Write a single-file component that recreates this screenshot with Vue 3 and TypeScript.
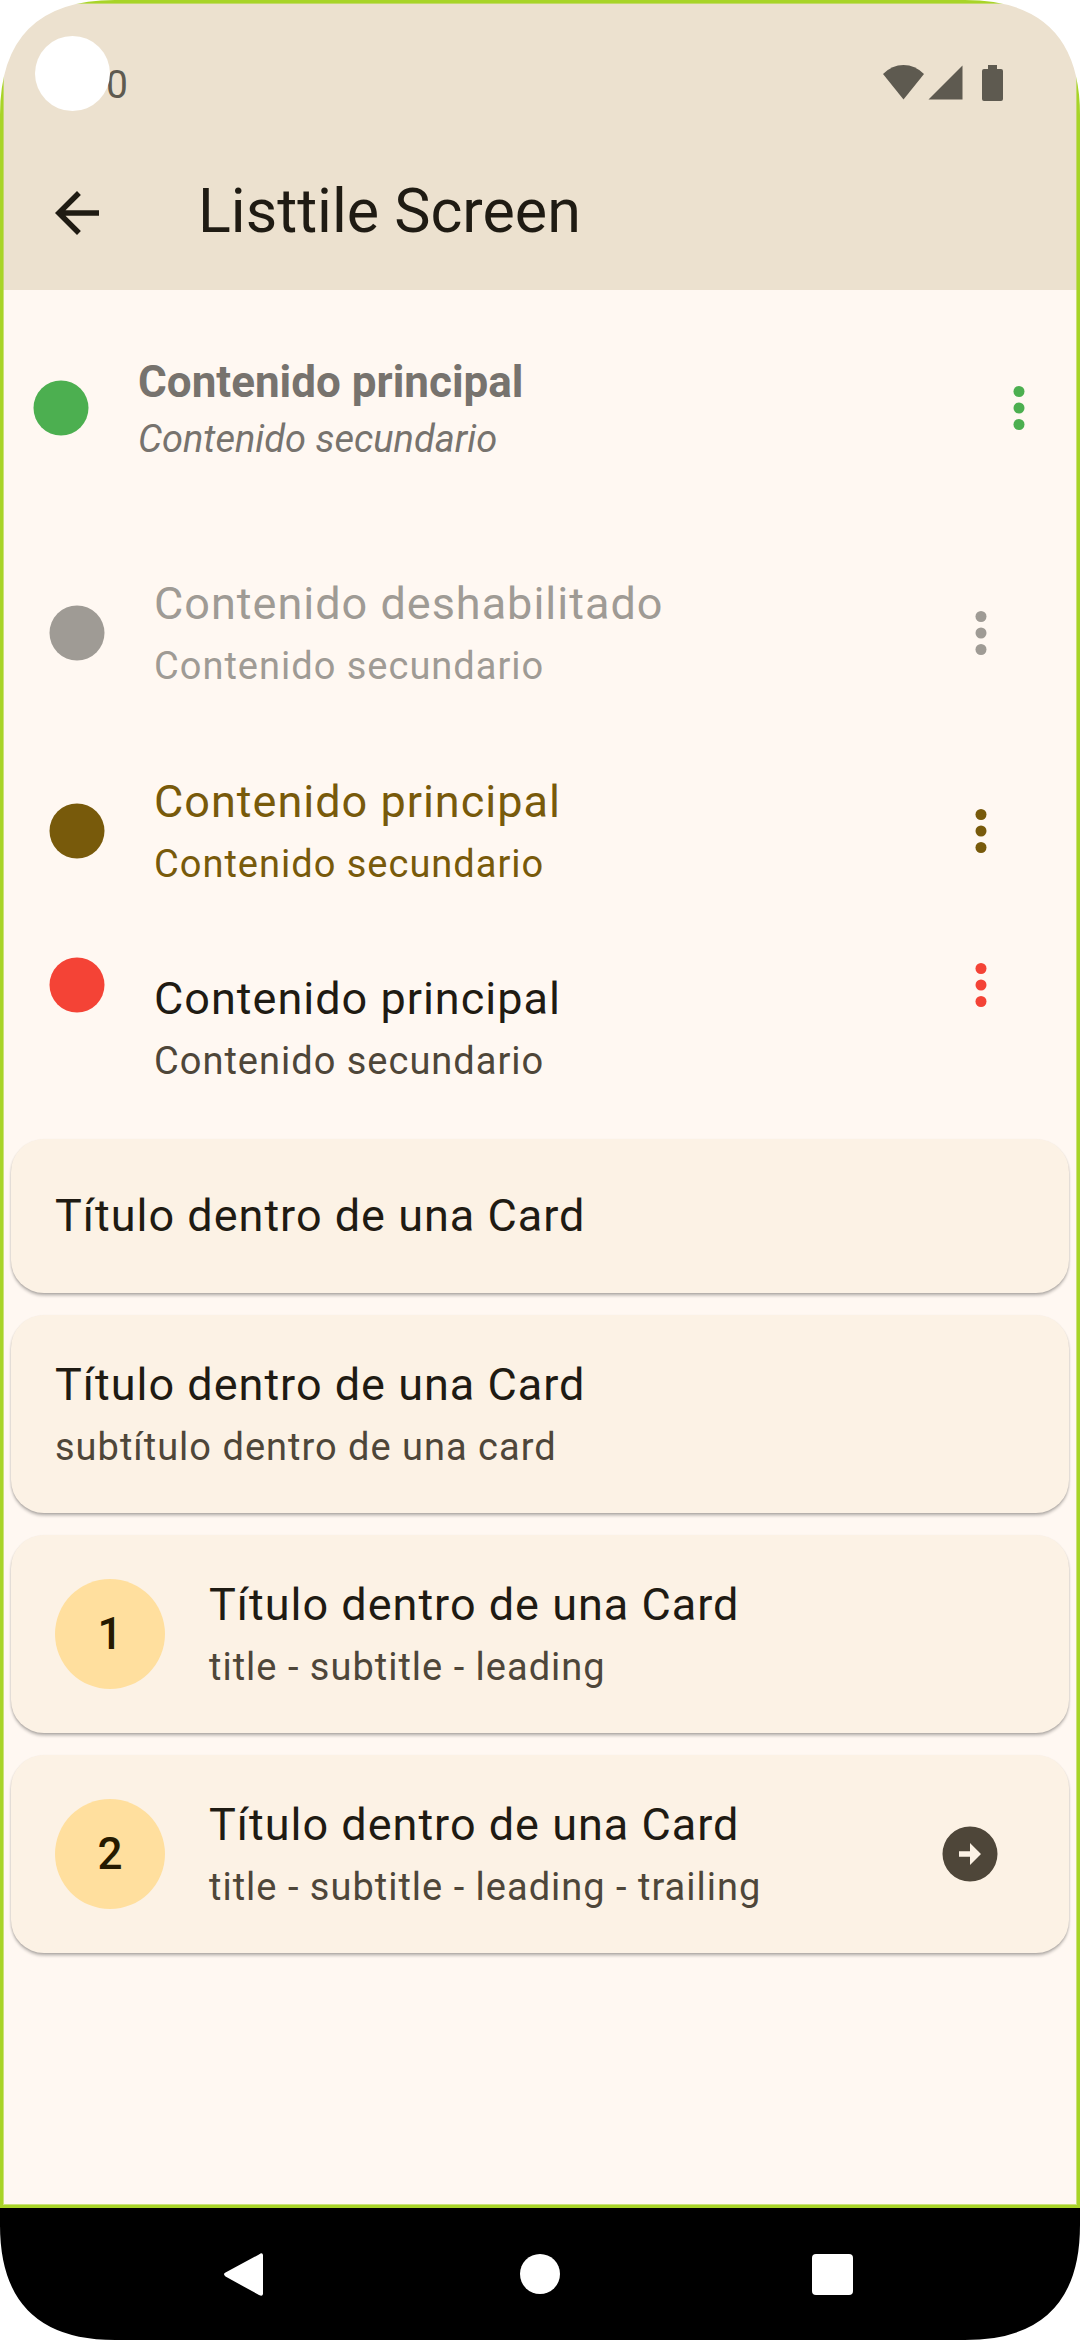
<script setup lang="ts">
interface Tile {
  title: string
  subtitle: string
  tone: 'emphasis' | 'disabled' | 'selected' | 'plain'
}

interface CardItem {
  title: string
  subtitle?: string
  leading?: string
  trailing?: boolean
}

const tiles: Tile[] = [
  { title: 'Contenido principal', subtitle: 'Contenido secundario', tone: 'emphasis' },
  { title: 'Contenido deshabilitado', subtitle: 'Contenido secundario', tone: 'disabled' },
  { title: 'Contenido principal', subtitle: 'Contenido secundario', tone: 'selected' },
  { title: 'Contenido principal', subtitle: 'Contenido secundario', tone: 'plain' },
]

const cards: CardItem[] = [
  { title: 'Título dentro de una Card' },
  { title: 'Título dentro de una Card', subtitle: 'subtítulo dentro de una card' },
  { title: 'Título dentro de una Card', subtitle: 'title - subtitle - leading', leading: '1' },
  {
    title: 'Título dentro de una Card',
    subtitle: 'title - subtitle - leading - trailing',
    leading: '2',
    trailing: true,
  },
]

const corners = ['top-left', 'top-right', 'bottom-right', 'bottom-left']
</script>

<template>
  <div class="device">
    <div class="screen">
      <header class="header">
        <div class="status-bar">
          <span class="clock">0</span>
          <div class="status-icons">
            <svg class="wifi" width="42" height="36" viewBox="0 0 42 36" aria-hidden="true">
              <path d="M0 9Q9 0 20.500 0Q32 0 41 9L20.500 34.500Z" />
            </svg>
            <svg class="signal" width="36" height="36" viewBox="0 0 36 36" aria-hidden="true">
              <path d="M34.500 0.500V34.500H0.500Z" />
            </svg>
            <svg width="21" height="36" viewBox="0 0 21 36" aria-hidden="true">
              <path d="M6 0h9v4h4q2 0 2 2v28q0 2-2 2h-17q-2 0-2-2v-28q0-2 2-2h4z" />
            </svg>
          </div>
        </div>
        <div class="app-bar">
          <button class="icon-button" type="button" aria-label="Volver">
            <svg class="icon" viewBox="0 0 24 24" aria-hidden="true">
              <path d="M20 11H7.830l5.590-5.590L12 4l-8 8 8 8 1.410-1.410L7.830 13H20v-2z" />
            </svg>
          </button>
          <h1 class="heading">Listtile Screen</h1>
        </div>
      </header>

      <main class="content">
        <ul class="tiles">
          <li v-for="(tile, i) in tiles" :key="i" class="tile" :class="tile.tone">
            <svg class="icon tinted" viewBox="0 0 24 24" aria-hidden="true">
              <circle cx="12" cy="12" r="10" />
            </svg>
            <div class="text">
              <div class="title">{{ tile.title }}</div>
              <div class="subtitle">{{ tile.subtitle }}</div>
            </div>
            <button
              class="icon-button tinted"
              type="button"
              aria-label="Más opciones"
              :disabled="tile.tone === 'disabled'"
            >
              <svg class="icon" viewBox="0 0 24 24" aria-hidden="true">
                <circle cx="12" cy="6" r="2" />
                <circle cx="12" cy="12" r="2" />
                <circle cx="12" cy="18" r="2" />
              </svg>
            </button>
          </li>
        </ul>

        <ul class="cards">
          <li v-for="(card, i) in cards" :key="i" class="card" :class="{ tall: card.subtitle }">
            <div v-if="card.leading" class="avatar">{{ card.leading }}</div>
            <div class="text">
              <div class="title">{{ card.title }}</div>
              <div v-if="card.subtitle" class="subtitle">{{ card.subtitle }}</div>
            </div>
            <svg v-if="card.trailing" class="icon" viewBox="0 0 24 24" aria-hidden="true">
              <path
                fill-rule="evenodd"
                d="M12 2a10 10 0 1 0 0 20 10 10 0 0 0 0-20zM12 8l4 4-4 4v-3H8v-2h4z"
              />
            </svg>
          </li>
        </ul>
      </main>
    </div>

    <nav class="nav-bar" aria-label="Sistema">
      <button type="button" aria-label="Atrás">
        <svg class="icon" viewBox="0 0 66 66" aria-hidden="true">
          <path d="M44 13.500Q47.500 11 48 14V53Q47.500 56 44 54L10.500 35.500Q7.500 33 10.500 31.500Z" />
        </svg>
      </button>
      <button type="button" aria-label="Inicio">
        <svg class="icon" viewBox="0 0 66 66" aria-hidden="true">
          <circle cx="33" cy="33" r="20" />
        </svg>
      </button>
      <button type="button" aria-label="Recientes">
        <svg class="icon" viewBox="0 0 66 66" aria-hidden="true">
          <rect x="13" y="13" width="41" height="41" rx="4" />
        </svg>
      </button>
    </nav>

    <span class="camera"></span>
    <svg
      v-for="corner in corners"
      :key="corner"
      class="corner"
      :class="corner"
      viewBox="0 0 115 115"
      aria-hidden="true"
    >
      <path d="M0 0H115Q0 0 0 115Z" />
    </svg>
  </div>
</template>

<style>
body {
  background: #ffffff;
}
</style>

<style scoped>
.device {
  position: relative;
  display: flex;
  flex-direction: column;
  min-height: 100vh;
  font-family: Roboto, 'Liberation Sans', sans-serif;
  color: #1f1b13;
}

.screen {
  position: relative;
  flex: 1;
  background: #fff8f2;
}

/* Green frame laid over the app */
.screen::after {
  content: '';
  position: absolute;
  inset: 0;
  border: 3px solid #a8d428;
  box-shadow: inset 0 0 0 1px rgba(168, 212, 40, 0.6);
  pointer-events: none;
}

.header {
  background: #ece1cf;
}

.status-bar {
  display: flex;
  align-items: flex-start;
  justify-content: space-between;
  height: 136px;
  box-sizing: border-box;
  padding: 63px 77px 0 106px;
  color: #5e5a50;
}

.clock {
  font-size: 39px;
  line-height: 44px;
}

.status-icons {
  display: flex;
  padding-top: 2px;
}

.status-icons svg {
  fill: currentColor;
}

.wifi {
  margin-right: 3px;
}

.signal {
  margin-right: 18px;
}

.app-bar {
  display: flex;
  align-items: center;
  gap: 88px;
  height: 154px;
  padding: 0 44px;
}

.heading {
  margin: 0;
  padding-bottom: 4px;
  font-size: 61px;
  font-weight: 400;
  line-height: 76px;
}

.icon {
  display: block;
  flex: none;
  width: 66px;
  height: 66px;
  fill: currentColor;
}

.icon-button {
  flex: none;
  padding: 0;
  border: 0;
  background: none;
  color: inherit;
}

.tiles,
.cards {
  margin: 0;
  padding: 0;
  list-style: none;
}

.tile {
  display: flex;
  align-items: center;
  gap: 44px;
  box-sizing: border-box;
  min-height: 198px;
  padding: 0 66px 0 44px;
}

.text {
  flex: 1;
}

.title {
  font-size: 45px;
  line-height: 62px;
  letter-spacing: 1px;
}

.subtitle {
  margin-top: 4px;
  font-size: 38px;
  line-height: 55px;
  letter-spacing: 1px;
  color: #4e4639;
}

.emphasis {
  min-height: 236px;
  margin-bottom: 8px;
  padding: 0 28px;
  color: #77736e;
}

.emphasis .text {
  padding-top: 2px;
}

.emphasis .title {
  font-size: 44px;
  font-weight: 700;
  line-height: 60px;
  letter-spacing: normal;
}

.emphasis .subtitle {
  margin-top: 0;
  font-style: italic;
  letter-spacing: normal;
  color: inherit;
}

.emphasis .tinted {
  color: #4caf50;
}

.disabled,
.disabled .subtitle {
  color: #9f9b95;
}

.selected,
.selected .subtitle {
  color: #785a0b;
}

.plain {
  align-items: flex-start;
  padding-top: 22px;
}

.plain .text {
  padding-top: 16px;
}

.plain .tinted {
  color: #f44336;
}

.card {
  display: flex;
  align-items: center;
  gap: 44px;
  box-sizing: border-box;
  min-height: 154px;
  margin: 11px 11px 22px;
  padding: 0 66px 0 44px;
  border-radius: 33px;
  background: #fcf2e5;
  box-shadow:
    0 3px 3px rgba(0, 0, 0, 0.2),
    0 1px 2px rgba(0, 0, 0, 0.16);
}

.card.tall {
  min-height: 198px;
}

.card .icon {
  color: #4e4639;
}

.avatar {
  display: flex;
  align-items: center;
  justify-content: center;
  flex: none;
  width: 110px;
  height: 110px;
  border-radius: 50%;
  background: #ffdf9e;
  color: #261a00;
  font-size: 44px;
  font-weight: 500;
  line-height: 62px;
}

.nav-bar {
  display: flex;
  align-items: center;
  height: 132px;
  padding: 0 102px;
  background: #000000;
}

.nav-bar button {
  display: flex;
  flex: 1;
  justify-content: center;
  padding: 0;
  border: 0;
  background: none;
  color: #ffffff;
}

.camera {
  position: absolute;
  top: 36px;
  left: 35px;
  width: 75px;
  height: 75px;
  border-radius: 50%;
  background: #ffffff;
}

.corner {
  position: absolute;
  width: 115px;
  height: 115px;
  fill: #ffffff;
}

.top-left {
  top: 0;
  left: 0;
}

.top-right {
  top: 0;
  right: 0;
  transform: rotate(90deg);
}

.bottom-right {
  right: 0;
  bottom: 0;
  transform: rotate(180deg);
}

.bottom-left {
  bottom: 0;
  left: 0;
  transform: rotate(270deg);
}
</style>
